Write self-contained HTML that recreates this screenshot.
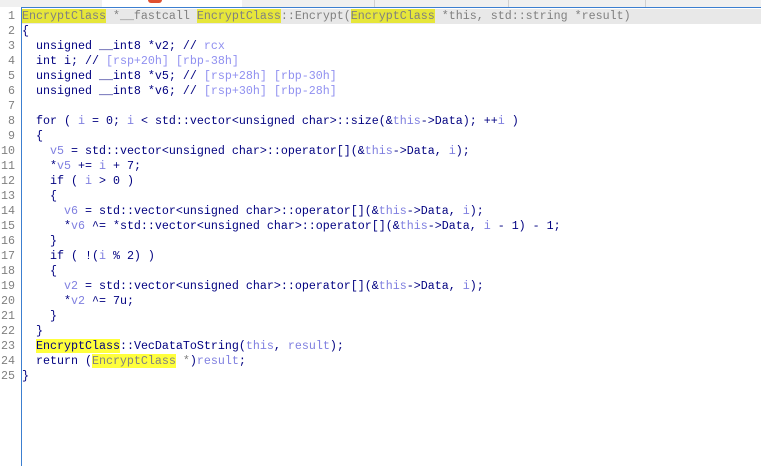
<!DOCTYPE html>
<html><head><style>
body{margin:0;width:761px;height:466px;background:#fff;overflow:hidden;position:relative;font-family:"Liberation Mono",monospace;font-size:11.67px}
.top{position:absolute;left:0;top:0;width:761px;height:7px;background:#f0f0f0}
.tab{position:absolute;top:0;height:7px;background:#fff}
.sep{position:absolute;top:0;width:1px;height:7px;background:#d0d0d0}
.bl{position:absolute;left:21px;top:7px;width:740px;height:1px;background:#3c7fd0}
.gut{position:absolute;left:21px;top:7px;width:1px;height:459px;background:#3c7fd0}
.cur{position:absolute;left:22px;top:9px;width:739px;height:15px;background:#e8e8e8}
.n{position:absolute;left:0;width:15px;text-align:right;color:#808080;height:15px;line-height:15px}
.l{position:absolute;left:22px;height:15px;line-height:15px;white-space:pre;color:#000080}
.v{color:#8080e0}.c{color:#9090f0}.g{color:#808080}
.h{background:#ffff3c}.h1{background:#e6e63a}
</style></head><body>
<div class="top"></div>
<div class="tab" style="left:102px;width:140px"></div>
<div style="position:absolute;left:148px;top:0;width:14px;height:3px;background:#e05030;border-radius:0 0 4px 4px"></div>
<div class="sep" style="left:374px"></div><div class="sep" style="left:508px"></div><div class="sep" style="left:645px"></div>
<div class="bl"></div><div class="gut"></div><div class="cur"></div>
<div class="n" style="top:9px">1</div><div class="n" style="top:24px">2</div><div class="n" style="top:39px">3</div><div class="n" style="top:54px">4</div><div class="n" style="top:69px">5</div><div class="n" style="top:84px">6</div><div class="n" style="top:99px">7</div><div class="n" style="top:114px">8</div><div class="n" style="top:129px">9</div><div class="n" style="top:144px">10</div><div class="n" style="top:159px">11</div><div class="n" style="top:174px">12</div><div class="n" style="top:189px">13</div><div class="n" style="top:204px">14</div><div class="n" style="top:219px">15</div><div class="n" style="top:234px">16</div><div class="n" style="top:249px">17</div><div class="n" style="top:264px">18</div><div class="n" style="top:279px">19</div><div class="n" style="top:294px">20</div><div class="n" style="top:309px">21</div><div class="n" style="top:324px">22</div><div class="n" style="top:339px">23</div><div class="n" style="top:354px">24</div><div class="n" style="top:369px">25</div>
<div class="l g" style="top:9px"><span class="h1">EncryptClass</span> *__fastcall <span class="h1">EncryptClass</span>::Encrypt(<span class="h1">EncryptClass</span> *this, std::string *result)</div>
<div class="l" style="top:24px">{</div>
<div class="l" style="top:39px">  unsigned __int8 *v2; // <span class="c">rcx</span></div>
<div class="l" style="top:54px">  int i; // <span class="c">[rsp+20h] [rbp-38h]</span></div>
<div class="l" style="top:69px">  unsigned __int8 *v5; // <span class="c">[rsp+28h] [rbp-30h]</span></div>
<div class="l" style="top:84px">  unsigned __int8 *v6; // <span class="c">[rsp+30h] [rbp-28h]</span></div>
<div class="l" style="top:114px">  for ( <span class="v">i</span> = 0; <span class="v">i</span> &lt; std::vector&lt;unsigned char&gt;::size(&amp;<span class="v">this</span>-&gt;Data); ++<span class="v">i</span> )</div>
<div class="l" style="top:129px">  {</div>
<div class="l" style="top:144px">    <span class="v">v5</span> = std::vector&lt;unsigned char&gt;::operator[](&amp;<span class="v">this</span>-&gt;Data, <span class="v">i</span>);</div>
<div class="l" style="top:159px">    *<span class="v">v5</span> += <span class="v">i</span> + 7;</div>
<div class="l" style="top:174px">    if ( <span class="v">i</span> &gt; 0 )</div>
<div class="l" style="top:189px">    {</div>
<div class="l" style="top:204px">      <span class="v">v6</span> = std::vector&lt;unsigned char&gt;::operator[](&amp;<span class="v">this</span>-&gt;Data, <span class="v">i</span>);</div>
<div class="l" style="top:219px">      *<span class="v">v6</span> ^= *std::vector&lt;unsigned char&gt;::operator[](&amp;<span class="v">this</span>-&gt;Data, <span class="v">i</span> - 1) - 1;</div>
<div class="l" style="top:234px">    }</div>
<div class="l" style="top:249px">    if ( !(<span class="v">i</span> % 2) )</div>
<div class="l" style="top:264px">    {</div>
<div class="l" style="top:279px">      <span class="v">v2</span> = std::vector&lt;unsigned char&gt;::operator[](&amp;<span class="v">this</span>-&gt;Data, <span class="v">i</span>);</div>
<div class="l" style="top:294px">      *<span class="v">v2</span> ^= 7u;</div>
<div class="l" style="top:309px">    }</div>
<div class="l" style="top:324px">  }</div>
<div class="l" style="top:339px">  <span class="h">EncryptClass</span>::VecDataToString(<span class="v">this</span>, <span class="v">result</span>);</div>
<div class="l" style="top:354px">  return (<span class="h g">EncryptClass</span><span class="g"> *</span>)<span class="v">result</span>;</div>
<div class="l" style="top:369px">}</div>
</body></html>
